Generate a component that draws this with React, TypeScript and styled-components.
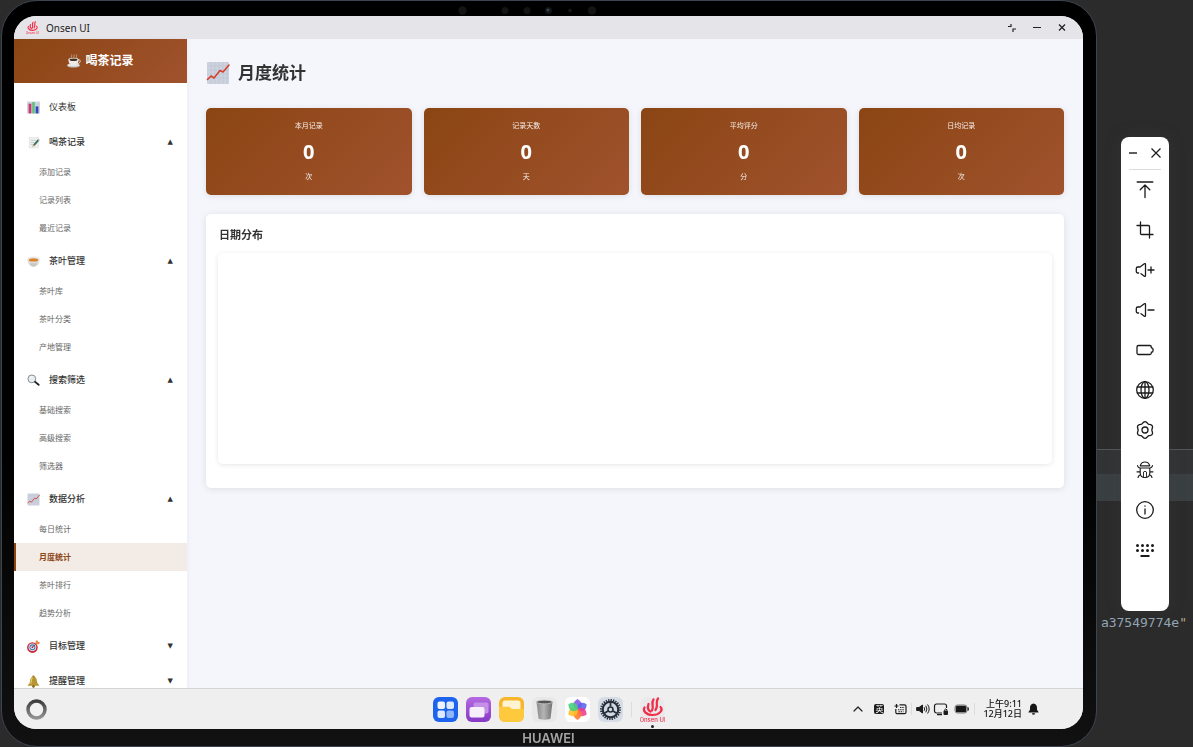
import React, { useState } from "react";
import styled, { createGlobalStyle, css } from "styled-components";

const GlobalStyle = createGlobalStyle`
  * { box-sizing: border-box; }
  body {
    margin: 0;
    background: #2b2b2b;
    font-family: "Noto Sans", "Noto Sans CJK SC", sans-serif;
    color: #333;
  }
  button { font: inherit; color: inherit; background: none; border: 0; padding: 0; cursor: pointer; }
  a { color: inherit; text-decoration: none; }
  ul { list-style: none; margin: 0; padding: 0; }
  h1, h2, p { margin: 0; }
  svg { display: block; flex: none; }
`;

const brand = "linear-gradient(135deg, #8b4513, #a0522d)";

/* ---------- Workspace and device ---------- */

const Workspace = styled.div`
  display: grid;
  grid-template-columns: minmax(0, 1fr) 96px;
  height: 100vh;
  overflow: hidden;
`;

const Device = styled.div`
  display: flex;
  flex-direction: column;
  min-height: 0;
  margin-left: 1px;
  padding: 0 13px 0 12px;
  background: linear-gradient(#000, #000 60%, #111);
  border: 1px solid #3c4450;
  border-radius: 36px;
`;

const CameraBar = styled.div`
  flex: none;
  height: 15px;
  display: flex;
  justify-content: center;
  padding: 3px 42px 0 0;
`;

const Screen = styled.div`
  flex: 1;
  min-height: 0;
  display: flex;
  flex-direction: column;
  overflow: hidden;
  border-radius: 22px;
  background: #f5f6fb;
`;

const DeviceBrand = styled.div`
  flex: none;
  height: 17px;
  text-align: center;
  font: 600 13px/19px Inter, "Liberation Sans", sans-serif;
  color: #a3a3a3;
`;

/* ---------- Window ---------- */

const TitleBar = styled.header`
  flex: none;
  display: flex;
  align-items: center;
  gap: 7px;
  height: 23px;
  padding: 0 15px 0 12px;
  background: #e5e4e9;
  font-size: 10px;
  line-height: 14px;
  color: #222;
`;

const WindowControls = styled.div`
  display: flex;
  gap: 13px;
  margin-left: auto;
`;

const WindowButton = styled.button`
  width: 12px;
  height: 12px;
`;

const AppBody = styled.div`
  flex: 1;
  min-height: 0;
  display: flex;
`;

/* ---------- Sidebar ---------- */

const Sidebar = styled.aside`
  flex: none;
  width: 173px;
  overflow-y: auto;
  scrollbar-width: none;
  background: #fff;
  box-shadow: 1px 0 4px rgba(0, 0, 0, 0.04);
`;

const SidebarHeader = styled.div`
  display: flex;
  align-items: center;
  justify-content: center;
  gap: 4px;
  height: 44px;
  background: ${brand};
  color: #fff;
  font-size: 12px;
  line-height: 18px;
  font-weight: 700;
`;

const Nav = styled.nav`
  padding: 5px 0;
`;

const topRow = css`
  display: flex;
  align-items: center;
  gap: 9px;
  width: 100%;
  height: 32px;
  margin-top: 3px;
  padding: 0 14px 0 13px;
  font-size: 9px;
  line-height: 14px;
  text-align: left;
`;

const NavLink = styled.a`
  ${topRow}
`;

const NavToggle = styled.button`
  ${topRow}
  font-weight: 500;
`;

const Arrow = styled.span`
  margin-left: auto;
  font-family: "DejaVu Sans", sans-serif;
  font-size: 7px;
  line-height: 8px;
`;

const SubLink = styled.a<{ $active?: boolean }>`
  display: flex;
  align-items: center;
  height: 28px;
  padding-left: 23px;
  border-left: 2px solid ${(p) => (p.$active ? "#8b4513" : "transparent")};
  background: ${(p) => (p.$active ? "#f3ebe6" : "transparent")};
  color: ${(p) => (p.$active ? "#8b4513" : "#666")};
  font-size: 8px;
  line-height: 12px;
  font-weight: ${(p) => (p.$active ? 700 : 400)};
`;

/* ---------- Main content ---------- */

const Main = styled.main`
  flex: 1;
  min-width: 0;
  padding: 19px;
`;

const PageTitle = styled.h1`
  display: flex;
  align-items: center;
  gap: 8px;
  margin-bottom: 20px;
  font-size: 17px;
  line-height: 30px;
  font-weight: 700;
`;

const StatGrid = styled.section`
  display: grid;
  grid-template-columns: repeat(4, 1fr);
  gap: 12px;
  margin-bottom: 19px;
`;

const StatCard = styled.div`
  display: flex;
  flex-direction: column;
  align-items: center;
  gap: 6px;
  padding: 11px;
  border-radius: 5px;
  background: ${brand};
  box-shadow: 0 1px 6px rgba(0, 0, 0, 0.1);
  color: #fff;
`;

const StatNote = styled.p`
  font-size: 7px;
  line-height: 14px;
  opacity: 0.9;
`;

const StatValue = styled.p`
  font-size: 20px;
  line-height: 25px;
  font-weight: 700;
`;

const Panel = styled.section`
  padding: 12px 12px 24px;
  border-radius: 5px;
  background: #fff;
  box-shadow: 0 1px 7px rgba(0, 0, 0, 0.1);
`;

const PanelTitle = styled.h2`
  margin-bottom: 9px;
  padding-left: 1px;
  font-size: 11px;
  line-height: 18px;
  font-weight: 700;
`;

const ChartArea = styled.div`
  min-height: 211px;
  border-radius: 5px;
  box-shadow: 0 1px 5px rgba(0, 0, 0, 0.1);
`;

/* ---------- Taskbar ---------- */

const Taskbar = styled.footer`
  flex: none;
  display: grid;
  grid-template-columns: 1fr auto 1fr;
  align-items: center;
  height: 41px;
  padding: 0 43px 0 12px;
  border-top: 1px solid #d3d4d7;
  background: #efefef;
`;

const HomeButton = styled.button`
  width: 21px;
  height: 21px;
`;

const Dock = styled.div`
  display: flex;
  align-items: center;
  gap: 8px;
  margin-left: 31px;
`;

const DockButton = styled.button<{ $running?: boolean }>`
  position: relative;
  width: 25px;
  height: 25px;
  ${(p) =>
    p.$running &&
    css`
      &::after {
        content: "";
        position: absolute;
        left: 11px;
        bottom: -6px;
        width: 3px;
        height: 3px;
        border-radius: 50%;
        background: #222;
      }
    `}
`;

const Separator = styled.span<{ $tall?: boolean }>`
  width: 1px;
  height: ${(p) => (p.$tall ? 15 : 12)}px;
  background: #dcdcdc;
`;

const Tray = styled.div`
  display: flex;
  align-items: center;
  justify-content: flex-end;
  gap: 4px;
`;

const TrayButton = styled.button<{ $wide?: boolean }>`
  display: flex;
  justify-content: center;
  width: ${(p) => (p.$wide ? 18 : 14)}px;
`;

const InputMethods = styled.div`
  display: flex;
  align-items: center;
  gap: 7px;
`;

const LanguageBadge = styled.span`
  width: 10px;
  height: 10px;
  border-radius: 2px;
  background: #1c1c1c;
  color: #fff;
  font-size: 8px;
  line-height: 10px;
  text-align: center;
`;

const Clock = styled.time`
  margin-left: 4px;
  font-size: 9px;
  line-height: 10px;
  font-weight: 500;
  text-align: right;
  white-space: pre-line;
  color: #111;
`;

/* ---------- Editor strip and floating tools ---------- */

const EditorStrip = styled.div`
  position: relative;
  display: grid;
  grid-template-rows: 449px 25px 27px 108px 28px;
`;

const EditorBand = styled.div<{ $tone: string; $ruled?: boolean }>`
  background: ${(p) => p.$tone};
  border-top: ${(p) => (p.$ruled ? "1px solid #555" : "0")};
`;

const CodeLine = styled.code`
  display: flex;
  justify-content: flex-end;
  padding-right: 6px;
  font: 13px/28px "DejaVu Sans Mono", monospace;
  color: #93a6b5;
`;

const CodeQuote = styled.span`
  color: #b9a58a;
`;

const Palette = styled.div`
  position: absolute;
  top: 137px;
  left: 24px;
  width: 48px;
  height: 474px;
  padding: 0 8px;
  border-radius: 8px;
  background: #fff;
  box-shadow: 0 0 16px rgba(70, 70, 70, 0.3);
`;

const PaletteHead = styled.div`
  display: flex;
  justify-content: space-between;
  align-items: center;
  height: 33px;
  border-bottom: 1px solid #dcdcdc;
`;

const PaletteTools = styled.div`
  display: flex;
  flex-direction: column;
  align-items: center;
`;

const ToolButton = styled.button`
  display: flex;
  align-items: center;
  justify-content: center;
  width: 32px;
  height: 40px;
`;

/* ---------- Drawings ---------- */

const ChartIcon = ({ size = 13 }: { size?: number }) => (
  <svg width={size} height={size} viewBox="0 0 24 24">
    <rect x="1" y="1" width="22" height="22" rx="1" fill="#cdd2df" />
    <path d="M1 5h22M1 9h22M1 13h22M1 17h22M5 1v22M9 1v22M13 1v22M17 1v22M21 1v22" stroke="#bdc3d2" strokeWidth=".6" />
    <path d="M1.500 18.500 5 15l3 2L14 9.500l3 1.500 6-7" fill="none" stroke="#d5402f" strokeWidth="1.600" strokeLinejoin="round" strokeLinecap="round" />
  </svg>
);

const BarsIcon = () => (
  <svg width="13" height="13" viewBox="0 0 24 24">
    <rect x="0" y="1" width="24" height="22" fill="#cfd5e2" />
    <path d="M0 6h24M0 11h24M0 16h24" stroke="#bcc4d4" />
    <rect x="3" y="5" width="5" height="18" fill="#c9386d" />
    <rect x="9.500" y="2" width="5" height="21" fill="#67c07c" />
    <rect x="16" y="10" width="5" height="13" fill="#3442bd" />
  </svg>
);

const MemoIcon = () => (
  <svg width="13" height="13" viewBox="0 0 24 24">
    <rect x="4" y="3" width="17" height="19" fill="#eff0f0" stroke="#d9dbdc" />
    <path d="M7 8h9M7 12h6M7 16h4" stroke="#aab0b5" />
    <path d="m10 20 2-5L20 6l3 2-8 9z" fill="#2f6c5f" />
    <path d="m10 20 2-5 3 2z" fill="#cfa36b" />
    <path d="m19 7 1.500-2 3 2L22 9z" fill="#c3b9a4" />
  </svg>
);

const TeaIcon = () => (
  <svg width="13" height="13" viewBox="0 0 24 24">
    <path d="M1 8c0 8 4 14 11 14S23 16 23 8z" fill="#dddcd7" />
    <path d="M5 15c2 4 4 6 7 6s5-2 7-6z" fill="#c9c7c1" />
    <ellipse cx="12" cy="8" rx="11" ry="4.500" fill="#eeece7" stroke="#cbc8c0" strokeWidth=".6" />
    <ellipse cx="12" cy="9" rx="8.500" ry="2.800" fill="#d9822b" />
  </svg>
);

const SearchIcon = () => (
  <svg width="13" height="13" viewBox="0 0 24 24">
    <circle cx="9" cy="9" r="7.200" fill="#e8edef" stroke="#888c8f" strokeWidth="1.800" />
    <path d="m15 14.500 6.500 5.500" stroke="#222" strokeWidth="3.500" strokeLinecap="round" />
    <path d="M5 8c1-2 3-3 5-3" stroke="#fff" strokeWidth="1.500" fill="none" />
  </svg>
);

const TargetIcon = () => (
  <svg width="13" height="13" viewBox="0 0 24 24">
    <circle cx="10" cy="14" r="9.800" fill="#c92c3a" />
    <circle cx="10" cy="13.500" r="7" fill="#eef1f6" />
    <circle cx="10" cy="13.500" r="5.500" fill="#3e77b8" />
    <circle cx="10" cy="13.500" r="3.500" fill="#eef1f6" />
    <circle cx="10" cy="13.500" r="1.800" fill="#c92c3a" />
    <path d="m10 13.500 9-9" stroke="#5b3f35" strokeWidth="1.500" />
    <path d="m15.500 8 .5-6 3-2 1 3 4 1-2 4z" fill="#e7894a" />
  </svg>
);

const BellEmoji = () => (
  <svg width="13" height="13" viewBox="0 0 24 24">
    <circle cx="12" cy="3.500" r="2.500" fill="#9d7e21" />
    <path d="M12 3c-5 0-6 4-6.500 9C5.200 15 4 17 1.500 18.500V20h21v-1.500C20 17 18.800 15 18.500 12 18 7 17 3 12 3z" fill="#b79530" />
    <path d="M10 5c-2 2-2 6-3 11" stroke="#e6cf77" strokeWidth="2" fill="none" />
    <circle cx="12" cy="21" r="2.500" fill="#866a18" />
  </svg>
);

const CoffeeIcon = () => (
  <svg width="14" height="14" viewBox="0 0 28 28">
    <ellipse cx="13" cy="23" rx="13" ry="4" fill="#c3c1bd" />
    <ellipse cx="13" cy="22" rx="12" ry="3" fill="#e5e4e1" />
    <path d="M22 12c6-2 7 6-2 8" fill="none" stroke="#deddd9" strokeWidth="2" />
    <path d="M3 11c0 8 3 12 10 12s10-4 10-12z" fill="#ecebe8" />
    <ellipse cx="13" cy="11" rx="10" ry="3.500" fill="#f5f4f1" />
    <ellipse cx="13" cy="11.500" rx="8" ry="2.500" fill="#46301f" />
    <path d="M9 8c-2-2 2-4 0-7M14 8c-2-2 2-4 0-7M19 8c-2-2 2-4 0-7" fill="none" stroke="#d5c4b9" strokeWidth="1.300" />
  </svg>
);

const OnsenMark = ({ size, tile }: { size: number; tile?: boolean }) => (
  <svg width={size} height={size} viewBox="0 0 25 25">
    {tile && <rect x=".5" y=".5" width="24" height="24" rx="6" fill="#e9e9eb" />}
    <g fill="none" stroke="#f22f48" strokeLinecap="round">
      <path d="M4.500 10.500c-2 3 1.500 7.500 8 7.500 7 0 11-5 8-8" strokeWidth="2.200" />
      <path d="M8.500 7c-1 3-1 6 2 7.500" strokeWidth="2.300" />
      <path d="M13.500 2.500c-3 4 1 7-1.500 11" strokeWidth="2.300" />
      <path d="M18 1.500c-3 4 .8 7.500-2.500 11.500" strokeWidth="2.300" />
    </g>
    <text x="12.500" y="24.500" textAnchor="middle" fontFamily="Inter, sans-serif" fontSize="6" fontWeight="500" fill="#f22f48">Onsen UI</text>
  </svg>
);

const CameraArray = () => (
  <svg width="139" height="12" viewBox="0 0 139 12">
    <g fill="#141414">
      <circle cx="4.500" cy="6.500" r="4.200" />
      <circle cx="47" cy="6.500" r="3.500" />
      <circle cx="69" cy="6.500" r="3.500" />
      <circle cx="90.500" cy="6.500" r="3.500" />
      <circle cx="112" cy="6.500" r="2" />
      <circle cx="134" cy="6.500" r="4.200" />
    </g>
    <circle cx="90" cy="6" r="1.500" fill="#34434f" />
  </svg>
);

const GridApp = () => (
  <svg width="25" height="25" viewBox="0 0 25 25">
    <rect width="25" height="25" rx="6" fill="#1d63ee" />
    <rect x="4.500" y="4.500" width="7.500" height="7.500" rx="2" fill="#eef4ff" />
    <rect x="13.500" y="4.500" width="7.500" height="7.500" rx="2" fill="#dce9ff" />
    <rect x="4.500" y="13.500" width="7.500" height="7.500" rx="2" fill="#dce9ff" />
    <rect x="13.500" y="13.500" width="7.500" height="7.500" rx="2" fill="#8fb5fb" />
  </svg>
);

const WindowsApp = () => (
  <svg width="25" height="25" viewBox="0 0 25 25">
    <defs>
      <linearGradient id="violet" x2="0" y2="1">
        <stop stopColor="#b56ae2" />
        <stop offset="1" stopColor="#8638c4" />
      </linearGradient>
    </defs>
    <rect width="25" height="25" rx="6" fill="url(#violet)" />
    <rect x="7.500" y="5.500" width="15" height="11" rx="2" fill="#c48fe6" />
    <rect x="3.500" y="10" width="15" height="10.500" rx="2" fill="#f7effc" />
  </svg>
);

const FilesApp = () => (
  <svg width="25" height="25" viewBox="0 0 25 25">
    <rect width="25" height="25" rx="6" fill="#f8b62a" />
    <rect x="3.500" y="3.500" width="18" height="14" rx="2.500" fill="#fff3d2" />
    <path d="M0 9.700h9.500c2 0 2.500 2.300 4.500 2.300h11V19a6 6 0 0 1-6 6H6a6 6 0 0 1-6-6z" fill="#ffc93e" />
  </svg>
);

const TrashApp = () => (
  <svg width="25" height="25" viewBox="0 0 25 25">
    <defs>
      <linearGradient id="steel">
        <stop stopColor="#8b8b8b" />
        <stop offset=".45" stopColor="#b4b4b4" />
        <stop offset="1" stopColor="#727272" />
      </linearGradient>
    </defs>
    <rect width="25" height="25" rx="6" fill="#e8e8e8" />
    <path d="m4.500 5 2 16.500c.2 1.500 11.800 1.500 12 0l2-16.500z" fill="url(#steel)" />
    <ellipse cx="12.500" cy="5" rx="8" ry="1.800" fill="#555" stroke="#c6c6c6" strokeWidth=".8" />
  </svg>
);

const petals = ["#8454e8", "#5a63ee", "#ee3d8c", "#ff7a2f", "#ffbd24", "#45cd7b"];

const GalleryApp = () => (
  <svg width="25" height="25" viewBox="0 0 25 25">
    <rect width="25" height="25" rx="6" fill="#fff" />
    {petals.map((fill, i) => (
      <path key={fill} d="M12.500 13C6.500 9.500 7.500 5 12.500 2c5 3 6 7.500 0 11z" fill={fill} opacity=".88" transform={`rotate(${i * 60} 12.5 12.5)`} />
    ))}
  </svg>
);

const SettingsApp = () => (
  <svg width="25" height="25" viewBox="0 0 25 25">
    <rect width="25" height="25" rx="6" fill="#d7dde7" />
    <circle cx="12.500" cy="12.500" r="9.600" fill="none" stroke="#27303a" strokeWidth="1.800" strokeDasharray="1.300 1.200" />
    <circle cx="12.500" cy="12.500" r="7.800" fill="#d3d9e2" stroke="#27303a" strokeWidth="2.200" />
    <circle cx="12.500" cy="12.500" r="2.500" fill="none" stroke="#27303a" strokeWidth="1.600" />
    <path d="M12.500 9.500V5M10 14l-4 2.500M15 14l4 2.500" stroke="#27303a" strokeWidth="1.800" />
  </svg>
);

const HomeRing = () => (
  <svg width="21" height="21" viewBox="0 0 21 21">
    <defs>
      <linearGradient id="ring" x2="0" y2="1">
        <stop stopColor="#3d3d3d" />
        <stop offset="1" stopColor="#929292" />
      </linearGradient>
    </defs>
    <circle cx="10.500" cy="10.500" r="8.500" fill="#f1f1f1" stroke="url(#ring)" strokeWidth="3.500" />
  </svg>
);

const ChevronUp = () => (
  <svg width="10" height="10" viewBox="0 0 10 10" fill="none" stroke="#222" strokeWidth="1.200" strokeLinecap="round" strokeLinejoin="round">
    <path d="m1 7 4-4 4 4" />
  </svg>
);

const KeyboardPlus = () => (
  <svg width="13" height="12" viewBox="0 0 13 12" fill="none" stroke="#1c1c1c">
    <path d="M5.500 1.800h5a1.500 1.500 0 0 1 1.500 1.500v5.900a1.500 1.500 0 0 1-1.500 1.500H3.300a1.500 1.500 0 0 1-1.500-1.500V6M.5 3h4M2.500 1v4" strokeWidth="1.200" />
    <path d="M6 4.500h4.500M4 6.700h6.500M4.500 8.800h5" strokeDasharray="1.400 .8" strokeWidth="1.100" />
  </svg>
);

const VolumeIcon = () => (
  <svg width="14" height="12" viewBox="0 0 14 12" fill="none" stroke="#1c1c1c" strokeLinecap="round">
    <path d="M1 4.500h2L6.500 2v8L3 7.500H1z" fill="#1c1c1c" strokeLinejoin="round" />
    <path d="M8.300 4.500q1 1.500 0 3M10 3q2 3 0 6M11.800 1.800q3 4.200 0 8.400" />
  </svg>
);

const ScreenLock = () => (
  <svg width="16" height="14" viewBox="0 0 16 14" fill="none" stroke="#1c1c1c">
    <path d="M9 11H3.500a2 2 0 0 1-2-2V4a2 2 0 0 1 2-2h8a2 2 0 0 1 2 2v2M4 12.600h5" strokeWidth="1.200" />
    <rect x="10.500" y="8.500" width="4.500" height="4.500" rx="1" fill="#1c1c1c" stroke="none" />
    <path d="M11.500 8.500V7.800q1.300-1.700 2.500 0v.7" />
  </svg>
);

const BatteryIcon = () => (
  <svg width="15" height="10" viewBox="0 0 15 10">
    <rect x="1" y="1" width="12" height="8" rx="2.500" fill="none" stroke="#777" />
    <rect x="1.800" y="1.800" width="10.400" height="6.400" rx="1.500" fill="#161616" />
    <path d="M14 3.500q1 1.500 0 3z" fill="#333" stroke="#333" />
  </svg>
);

const BellIcon = () => (
  <svg width="11" height="12" viewBox="0 0 11 12" fill="#161616">
    <path d="M5.500.4C3.400.7 2 2.300 2 4.600v2.200L.5 8.900v.7h10v-.7L9 6.800V4.600C9 2.300 7.600.7 5.500.4zM3.800 10.200h3.400q-.4 1.500-1.700 1.500t-1.700-1.500z" />
  </svg>
);

const Line = ({ children }: { children: React.ReactNode }) => (
  <svg width="20" height="20" viewBox="0 0 20 20" fill="none" stroke="#1b1b1b" strokeWidth="1.300" strokeLinecap="round" strokeLinejoin="round">
    {children}
  </svg>
);

const speaker = <path d="M3.600 13H2.800a1.500 1.500 0 0 1-1.500-1.500v-3A1.500 1.500 0 0 1 2.800 7H5l4.300-3.200q1.200-.7 1.200.6v11.200q0 1.300-1.200.6l-3.300-2.500" />;

/* Six-lobed outline of the gear, sampled around its centre. */
const gearOutline =
  Array.from({ length: 72 }, (_, i) => {
    const a = (i * Math.PI) / 36;
    const r = 7.6 - 0.75 * Math.cos(6 * a + Math.PI);
    return `${i ? "L" : "M"}${(10 + r * Math.sin(a)).toFixed(2)} ${(10 - r * Math.cos(a)).toFixed(2)}`;
  }).join("") + "Z";

const tools: { label: string; icon: React.ReactNode }[] = [
  { label: "上滑", icon: <Line><path d="M2.200 2h15.600M10 17.500V5M5.200 9.800 10 5l4.800 4.800" /></Line> },
  { label: "截图", icon: <Line><path d="M2 5.500h11.500a1 1 0 0 1 1 1V18M5.500 2v11.500a1 1 0 0 0 1 1H18" /></Line> },
  { label: "音量加", icon: <Line>{speaker}<path d="M13 10h6M16 7v6" /></Line> },
  { label: "音量减", icon: <Line>{speaker}<path d="M13 10h6" /></Line> },
  { label: "电池", icon: <Line><path d="M3.500 5.500h11.300a1.500 1.500 0 0 1 1.500 1.500v.8q1.700 0 1.700 1.200v2q0 1.200-1.700 1.200v.8a1.500 1.500 0 0 1-1.500 1.500H3.500A1.500 1.500 0 0 1 2 13V7a1.500 1.500 0 0 1 1.500-1.500z" /></Line> },
  { label: "网络", icon: <Line><circle cx="10" cy="10" r="8.300" /><ellipse cx="10" cy="10" rx="4" ry="8.300" /><path d="M10 1.700v16.600M2.300 7h15.400M2.300 13h15.400" /></Line> },
  { label: "设置", icon: <Line><circle cx="10" cy="10" r="3" /><path d={gearOutline} /></Line> },
  { label: "调试", icon: <Line><g strokeWidth="1.150"><path d="M5.200 5.800Q6.200 2 10 2t4.800 3.800zM5.200 8h9.600v5q0 4.500-4.800 4.500T5.200 13zM2.500 5.500Q3 8 5.200 8M17.500 5.500Q17 8 14.800 8M5.200 11.800H2M14.800 11.800H18M5.600 14.500q-2 .7-2.600 3M14.400 14.500q2 .7 2.600 3" /><path d="M8.500 17v-5q1.500-1.500 3 0v5" strokeWidth=".9" /></g></Line> },
  { label: "信息", icon: <Line><circle cx="10" cy="10" r="8.300" /><path d="M10 9v5M10 6v.2" /></Line> },
  { label: "键盘", icon: <Line>{[2.5, 7.5, 12.5, 17.5].map((x) => <path key={x} d={`M${x} 5.500v.1M${x} 10.500v.1`} strokeWidth="3" />)}<path d="M5.500 16h9" strokeWidth="2" strokeLinecap="butt" /></Line> },
];

/* ---------- Data ---------- */

const groups = [
  { name: "喝茶记录", icon: <MemoIcon />, open: true, items: ["添加记录", "记录列表", "最近记录"] },
  { name: "茶叶管理", icon: <TeaIcon />, open: true, items: ["茶叶库", "茶叶分类", "产地管理"] },
  { name: "搜索筛选", icon: <SearchIcon />, open: true, items: ["基础搜索", "高级搜索", "筛选器"] },
  { name: "数据分析", icon: <ChartIcon />, open: true, items: ["每日统计", "月度统计", "茶叶排行", "趋势分析"] },
  { name: "目标管理", icon: <TargetIcon />, open: false, items: [] },
  { name: "提醒管理", icon: <BellEmoji />, open: false, items: [] },
];

const stats = [
  { label: "本月记录", value: 0, unit: "次" },
  { label: "记录天数", value: 0, unit: "天" },
  { label: "平均评分", value: 0, unit: "分" },
  { label: "日均记录", value: 0, unit: "次" },
];

const dockApps = [
  { label: "应用中心", icon: <GridApp /> },
  { label: "多任务", icon: <WindowsApp /> },
  { label: "文件管理", icon: <FilesApp /> },
  { label: "回收站", icon: <TrashApp /> },
  { label: "图库", icon: <GalleryApp /> },
  { label: "系统设置", icon: <SettingsApp /> },
];

type Group = (typeof groups)[number];

function NavGroup({ name, icon, open: initial, items }: Group) {
  const [open, setOpen] = useState(initial);
  return (
    <li>
      <NavToggle aria-expanded={open} onClick={() => setOpen(!open)}>
        {icon}
        {name}
        <Arrow>{open ? "▲" : "▼"}</Arrow>
      </NavToggle>
      {open && (
        <ul>
          {items.map((item) => (
            <li key={item}>
              <SubLink href="#" $active={item === "月度统计"}>{item}</SubLink>
            </li>
          ))}
        </ul>
      )}
    </li>
  );
}

export default function App() {
  return (
    <Workspace lang="zh-CN">
      <GlobalStyle />
      <Device>
        <CameraBar><CameraArray /></CameraBar>
        <Screen>
          <TitleBar>
            <OnsenMark size={13} />
            <span>Onsen UI</span>
            <WindowControls>
              <WindowButton aria-label="还原">
                <svg width="12" height="12" viewBox="0 0 12 12" fill="none" stroke="#222" strokeWidth="1.200"><path d="M2 4.500h3V2M7 10V7h3" /></svg>
              </WindowButton>
              <WindowButton aria-label="最小化">
                <svg width="12" height="12" viewBox="0 0 12 12" stroke="#222" strokeWidth="1.200"><path d="M2 5.500h8" /></svg>
              </WindowButton>
              <WindowButton aria-label="关闭">
                <svg width="12" height="12" viewBox="0 0 12 12" stroke="#222" strokeWidth="1.300"><path d="m3 2.500 6 6M9 2.500l-6 6" /></svg>
              </WindowButton>
            </WindowControls>
          </TitleBar>
          <AppBody>
            <Sidebar>
              <SidebarHeader><CoffeeIcon />喝茶记录</SidebarHeader>
              <Nav>
                <ul>
                  <li><NavLink href="#"><BarsIcon />仪表板</NavLink></li>
                  {groups.map((g) => <NavGroup key={g.name} {...g} />)}
                </ul>
              </Nav>
            </Sidebar>
            <Main>
              <PageTitle><ChartIcon size={24} />月度统计</PageTitle>
              <StatGrid>
                {stats.map((s) => (
                  <StatCard key={s.label}>
                    <StatNote>{s.label}</StatNote>
                    <StatValue>{s.value}</StatValue>
                    <StatNote>{s.unit}</StatNote>
                  </StatCard>
                ))}
              </StatGrid>
              <Panel>
                <PanelTitle>日期分布</PanelTitle>
                <ChartArea />
              </Panel>
            </Main>
          </AppBody>
          <Taskbar>
            <HomeButton aria-label="主页"><HomeRing /></HomeButton>
            <Dock>
              {dockApps.map((a) => <DockButton key={a.label} aria-label={a.label}>{a.icon}</DockButton>)}
              <Separator $tall />
              <DockButton aria-label="Onsen UI" $running><OnsenMark size={25} tile /></DockButton>
            </Dock>
            <Tray>
              <InputMethods>
                <TrayButton aria-label="展开"><ChevronUp /></TrayButton>
                <TrayButton><LanguageBadge>英</LanguageBadge></TrayButton>
                <TrayButton aria-label="输入法"><KeyboardPlus /></TrayButton>
              </InputMethods>
              <Separator />
              <TrayButton aria-label="音量"><VolumeIcon /></TrayButton>
              <TrayButton aria-label="投屏"><ScreenLock /></TrayButton>
              <TrayButton aria-label="电量" $wide><BatteryIcon /></TrayButton>
              <Separator />
              <Clock>{"上午9:11\n12月12日"}</Clock>
              <TrayButton aria-label="通知"><BellIcon /></TrayButton>
            </Tray>
          </Taskbar>
        </Screen>
        <DeviceBrand>HUAWEI</DeviceBrand>
      </Device>
      <EditorStrip>
        <EditorBand $tone="#2b2b2b" />
        <EditorBand $tone="#313335" $ruled />
        <EditorBand $tone="#3a3f41" />
        <EditorBand $tone="#2b2b2b" />
        <CodeLine>a37549774e<CodeQuote>"</CodeQuote></CodeLine>
        <Palette>
          <PaletteHead>
            <button aria-label="最小化">
              <svg width="8" height="12" viewBox="0 0 8 12" stroke="#1b1b1b" strokeWidth="1.400"><path d="M0 6h8" /></svg>
            </button>
            <button aria-label="关闭">
              <svg width="10" height="12" viewBox="0 0 10 12" stroke="#1b1b1b" strokeWidth="1.200"><path d="m.5 1.500 9 9M9.500 1.500l-9 9" /></svg>
            </button>
          </PaletteHead>
          <PaletteTools>
            {tools.map((t) => <ToolButton key={t.label} aria-label={t.label}>{t.icon}</ToolButton>)}
          </PaletteTools>
        </Palette>
      </EditorStrip>
    </Workspace>
  );
}
